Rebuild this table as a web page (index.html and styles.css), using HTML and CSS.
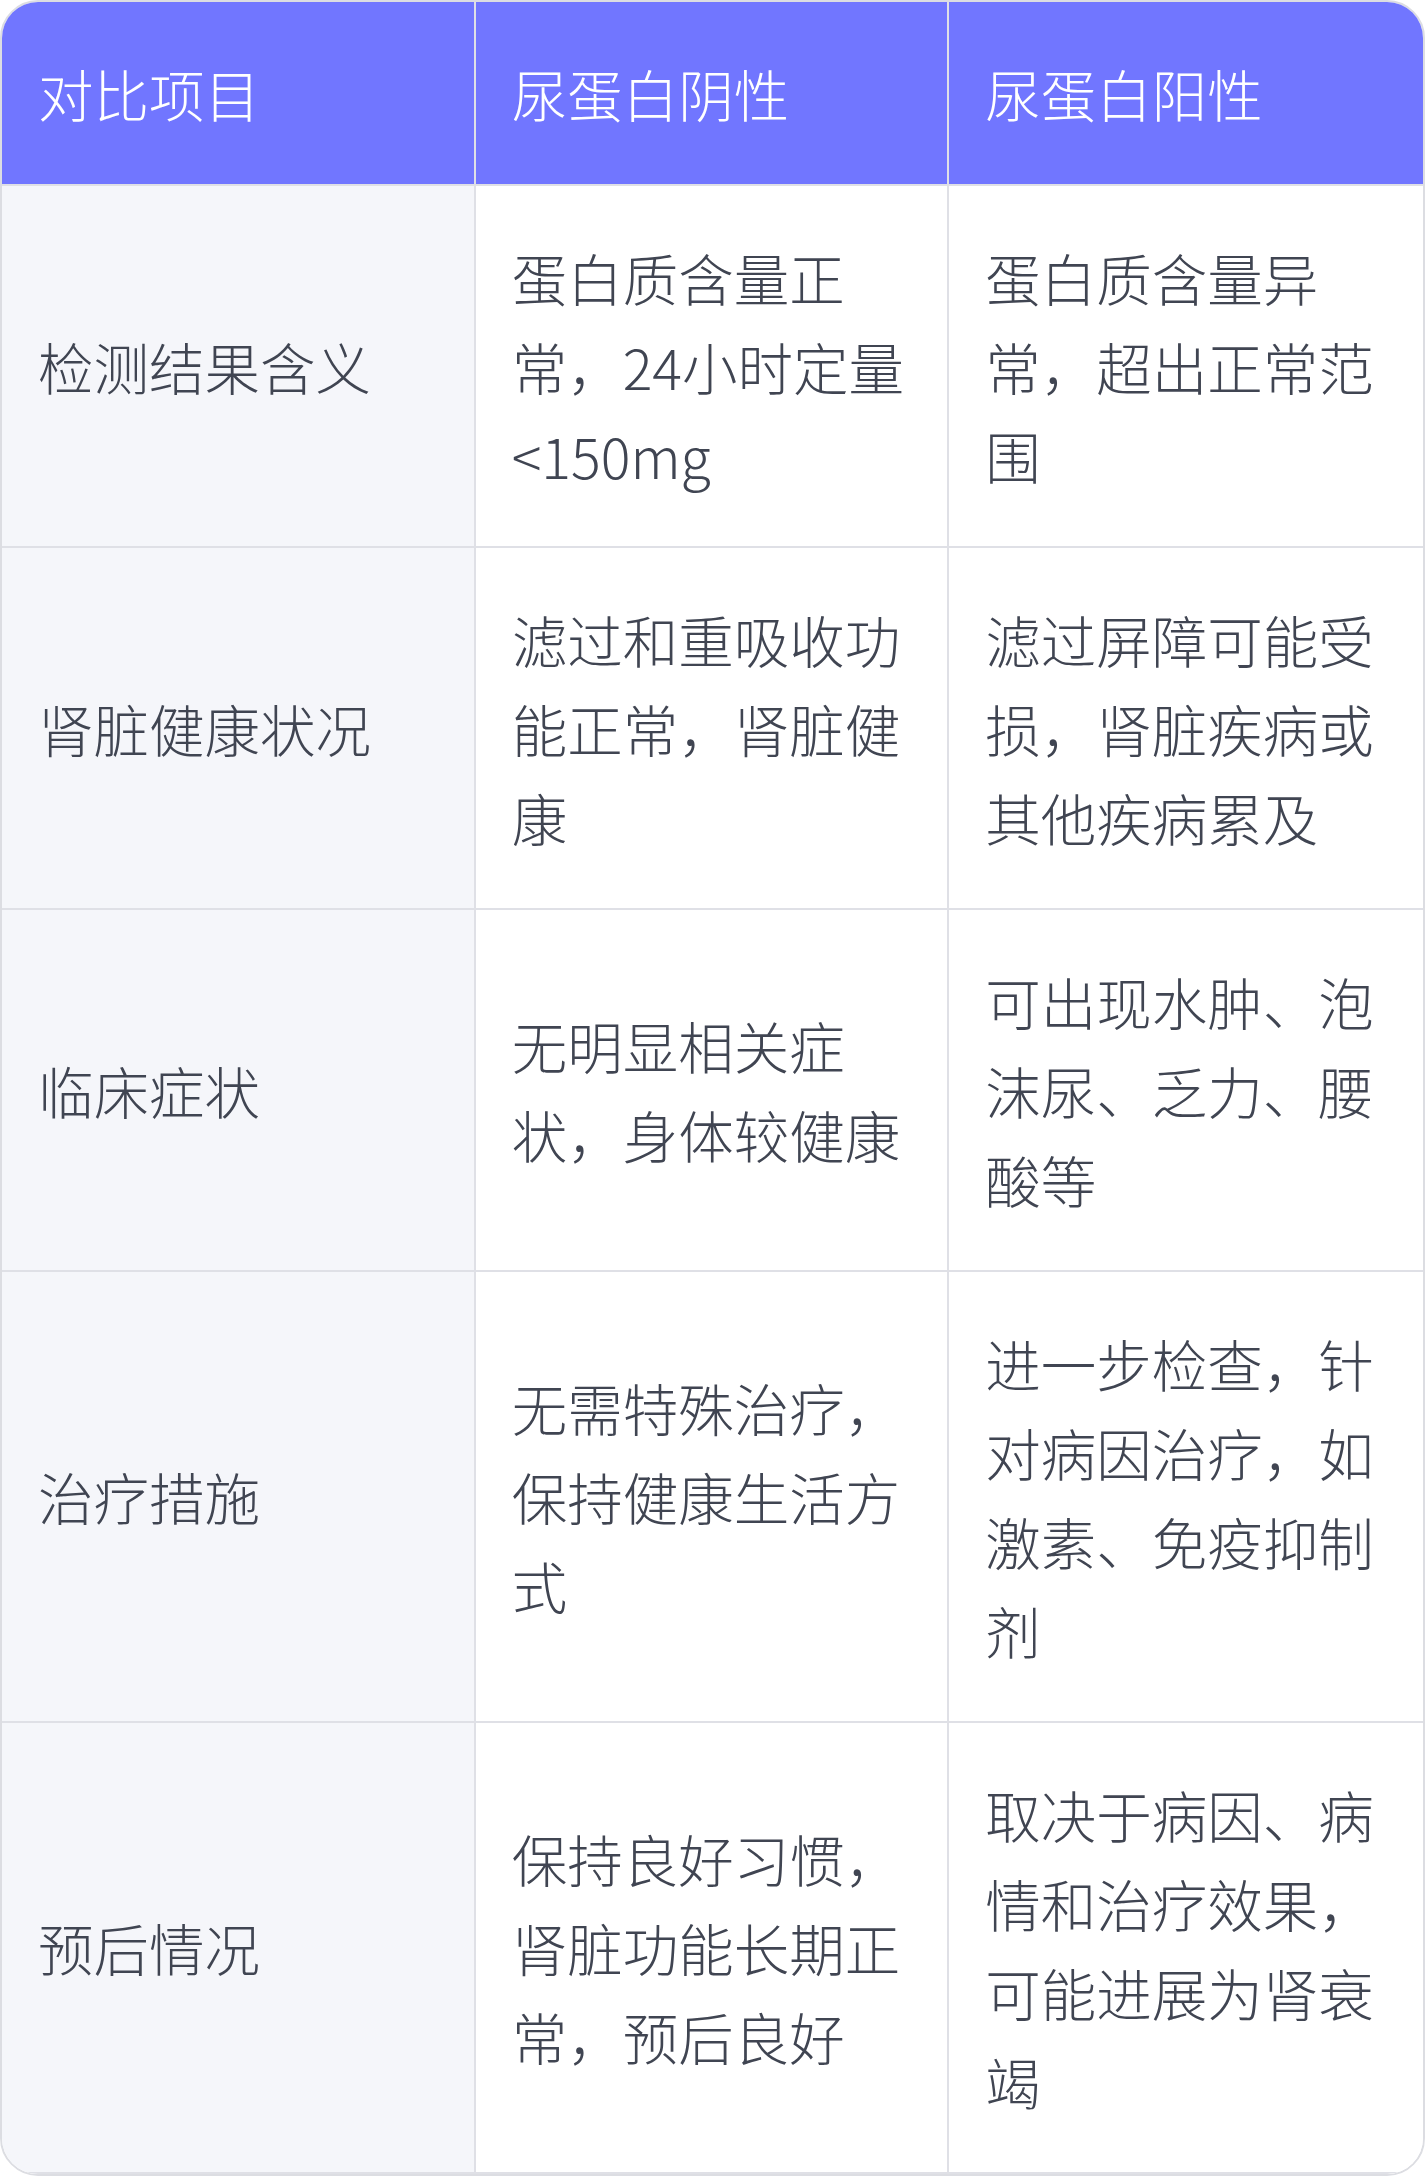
FILE: index.html
```html
<!DOCTYPE html>
<html lang="zh-CN">
<head>
<meta charset="utf-8">
<title>尿蛋白阴性与阳性对比</title>
<link rel="stylesheet" href="styles.css">
</head>
<body>
<div class="card">
  <table class="compare">
    <colgroup>
      <col class="c"><col class="c"><col class="c">
    </colgroup>
    <thead>
      <tr>
        <th>对比项目</th>
        <th>尿蛋白阴性</th>
        <th>尿蛋白阳性</th>
      </tr>
    </thead>
    <tbody>
      <tr>
        <td class="label">检测结果含义</td>
        <td>蛋白质含量正常，24小时定量&lt;150mg</td>
        <td>蛋白质含量异常，超出正常范围</td>
      </tr>
      <tr>
        <td class="label">肾脏健康状况</td>
        <td>滤过和重吸收功能正常，肾脏健康</td>
        <td>滤过屏障可能受损，肾脏疾病或其他疾病累及</td>
      </tr>
      <tr>
        <td class="label">临床症状</td>
        <td>无明显相关症状，身体较健康</td>
        <td>可出现水肿、泡沫尿、乏力、腰酸等</td>
      </tr>
      <tr>
        <td class="label">治疗措施</td>
        <td>无需特殊治疗，保持健康生活方式</td>
        <td>进一步检查，针对病因治疗，如激素、免疫抑制剂</td>
      </tr>
      <tr>
        <td class="label">预后情况</td>
        <td>保持良好习惯，肾脏功能长期正常，预后良好</td>
        <td>取决于病因、病情和治疗效果，可能进展为肾衰竭</td>
      </tr>
    </tbody>
  </table>
</div>
</body>
</html>
```

FILE: styles.css
```css
html, body {
  margin: 0;
  padding: 0;
  background: #ffffff;
}

body {
  font-family: "Noto Sans CJK SC", "Noto Sans", sans-serif;
  color: #404552;
}

.card {
  width: 1425px;
  box-sizing: border-box;
  border: 2px solid #dcdde2;
  border-radius: 38px;
  overflow: hidden;
  background: #ffffff;
}

.compare {
  width: 100%;
  table-layout: fixed;
  border-collapse: separate;
  border-spacing: 0;
}

.compare .c {
  width: 33.333%;
}

.compare th,
.compare td {
  font-size: 55.5px;
  line-height: 89px;
  font-weight: 300;
  padding: 46.5px 35px 46.5px 36px;
  text-align: left;
  vertical-align: middle;
  border-right: 2px solid #dfe0e6;
  border-bottom: 2px solid #dfe0e6;
  word-break: normal;
  line-break: strict;
}

.compare th:last-child,
.compare td:last-child {
  border-right: none;
}

.compare th {
  background: #7176ff;
  color: #ffffff;
}

.compare td {
  background: #ffffff;
}

.compare td.label {
  background: #f5f6fa;
}
```
